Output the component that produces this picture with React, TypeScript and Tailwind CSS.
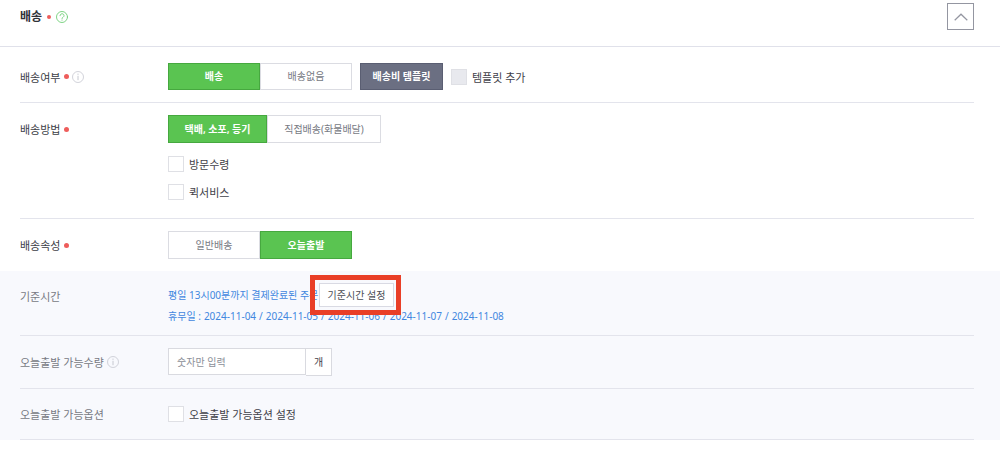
import { Fragment, useState, type ReactNode } from 'react';

const HOLIDAYS = ['2024-11-04', '2024-11-05', '2024-11-06', '2024-11-07', '2024-11-08'];

function Dot({ small = false }: { small?: boolean }) {
  return (
    <span
      role="img"
      aria-label="필수"
      className={small ? 'size-1 rounded-full bg-[#ee5d5b]' : 'size-[5px] rounded-full bg-[#ee5d5b]'}
    />
  );
}

function InfoButton() {
  return (
    <button type="button" aria-label="도움말" className="-ml-px text-[#c6c8d0]">
      <svg viewBox="0 0 12 12" className="size-3" fill="none" stroke="currentColor">
        <circle cx="6" cy="6" r="5.5" strokeWidth="0.8" />
        <path d="M6 4.800v4.400M6 2.600v1.200" strokeWidth="1" />
      </svg>
    </button>
  );
}

interface RowProps {
  label: string;
  required?: boolean;
  info?: boolean;
  muted?: boolean;
  last?: boolean;
  pad: string;
  head: string;
  children: ReactNode;
}

function Row({ label, required, info, muted, last, pad, head, children }: RowProps) {
  return (
    <div className={`ml-5 mr-[26px] flex ${last ? '' : 'border-b border-[#e3e4ec]'} ${pad}`}>
      <div
        className={`flex w-[148px] shrink-0 items-center gap-1 text-[11px] ${head} ${
          muted ? 'text-[#777a83]' : 'text-[#3c3e46]'
        }`}
      >
        <span className="pt-0.5 leading-4">{label}</span>
        {required && <Dot />}
        {info && <InfoButton />}
      </div>
      <div className="min-w-0 flex-1">{children}</div>
    </div>
  );
}

interface ToggleProps {
  label: string;
  options: { text: string; width: string }[];
  initial: number;
  height: string;
}

function Toggle({ label, options, initial, height }: ToggleProps) {
  const [active, setActive] = useState(initial);
  return (
    <div role="group" aria-label={label} className="flex">
      {options.map((option, i) => (
        <button
          key={option.text}
          type="button"
          aria-pressed={i === active}
          onClick={() => setActive(i)}
          className={`border text-[10px] ${height} ${option.width} ${
            i === active
              ? 'border-[#46a83f] bg-[#5ac451] font-semibold text-white'
              : i > active
                ? 'border-[#dbdce2] bg-white text-[#777a83]'
                : 'border-[#dbdce2] bg-white text-[#777a83]'
          }`}
        >
          {option.text}
        </button>
      ))}
    </div>
  );
}

function Check({ label, disabled = false }: { label: string; disabled?: boolean }) {
  return (
    <label className="flex h-4 w-fit items-center gap-[5px] text-[11px] text-[#3f4149]">
      <input
        type="checkbox"
        disabled={disabled}
        className="size-4 shrink-0 appearance-none border border-[#dfe0e5] bg-white checked:bg-[#5ac451] disabled:bg-[#e8e9ee]"
      />
      <span className="pt-0.5 leading-4">{label}</span>
    </label>
  );
}

export default function App() {
  return (
    <main className="bg-white font-['Noto_Sans','Noto_Sans_CJK_KR',sans-serif]">
      <header className="flex items-start justify-between border-b border-[#e0e1ea] pt-[3px] pr-[26px] pb-4 pl-5">
        <div className="flex h-[27px] items-center gap-[5px]">
          <h2 className="text-xs font-semibold text-[#303239]">배송</h2>
          <Dot small />
          <button type="button" aria-label="배송 도움말" className="text-[#72cf78]">
            <svg viewBox="0 0 12 12" className="size-3" fill="none" stroke="currentColor" strokeLinecap="round">
              <circle cx="6" cy="6" r="5.5" strokeWidth="0.9" />
              <path d="M4 4.700a2 1.900 0 1 1 3.100 1.500C6.400 6.600 6 6.900 6 7.500M6 9v.2" strokeWidth="0.9" />
            </svg>
          </button>
        </div>
        <button
          type="button"
          aria-label="접기"
          className="flex size-[27px] items-center justify-center border border-[#9496a1] text-[#9496a1]"
        >
          <svg viewBox="0 0 14 8" className="h-2 w-3.5" fill="none" stroke="currentColor">
            <path d="M.7 7.200 7 1.200l6.300 6" strokeWidth="1.200" />
          </svg>
        </button>
      </header>

      <Row label="배송여부" required info pad="pt-4 pb-3" head="h-[27px]">
        <div className="flex items-center gap-2">
          <Toggle
            label="배송여부"
            options={[
              { text: '배송', width: 'w-[92px]' },
              { text: '배송없음', width: 'w-[92px]' },
            ]}
            initial={0}
            height="h-[27px]"
          />
          <button
            type="button"
            className="h-[27px] w-[83px] border border-[#5a5e72] bg-[#6b6f82] text-[10px] font-semibold text-white"
          >
            배송비 템플릿
          </button>
          <Check label="템플릿 추가" disabled />
        </div>
      </Row>

      <Row label="배송방법" required pad="pt-3 pb-[18px]" head="h-7">
        <Toggle
          label="배송방법"
          options={[
            { text: '택배, 소포, 등기', width: 'w-[99px]' },
            { text: '직접배송(화물배달)', width: 'w-[114px]' },
          ]}
          initial={0}
          height="h-7"
        />
        <div className="mt-[13px] flex flex-col gap-3">
          <Check label="방문수령" />
          <Check label="퀵서비스" />
        </div>
      </Row>

      <Row label="배송속성" required last pad="py-3" head="h-7">
        <Toggle
          label="배송속성"
          options={[
            { text: '일반배송', width: 'w-[92px]' },
            { text: '오늘출발', width: 'w-[92px]' },
          ]}
          initial={1}
          height="h-7"
        />
      </Row>

      <section aria-label="오늘출발 설정" className="bg-[#f8f9fd]">
        <Row label="기준시간" muted pad="pt-3 pb-[10px]" head="h-[26px]">
          <div className="flex h-6 items-center text-[10px] text-[#4287df]">
            <span className="w-[151px] whitespace-nowrap">평일 13시00분까지 결제완료된 주문</span>
            <div className="relative">
              <button
                type="button"
                className="h-6 w-[75px] border border-[#d9dae3] bg-white text-[#4b4d55]"
              >
                기준시간 설정
              </button>
              <span className="pointer-events-none absolute -top-2 -right-[7px] -bottom-2 -left-[9px] z-10 border-5 border-[#e93f27]" />
            </div>
          </div>
          <p className="flex h-[18px] gap-[3px] text-[10px] leading-[18px] whitespace-nowrap text-[#4287df]">
            <span>휴무일 :</span>
            {HOLIDAYS.map((day, i) => (
              <Fragment key={day}>
                {i > 0 && <span>/</span>}
                <span>{day}</span>
              </Fragment>
            ))}
          </p>
        </Row>

        <Row label="오늘출발 가능수량" info muted pad="py-3" head="h-7">
          <div className="flex items-start">
            <input
              type="text"
              inputMode="numeric"
              aria-label="오늘출발 가능수량"
              placeholder="숫자만 입력"
              className="h-[27px] w-[138px] border border-[#d9dae0] bg-white px-2 text-[10px] text-[#3f4149] placeholder:text-[#8c8f98]"
            />
            <span className="flex h-7 w-[26px] items-center justify-center border border-l-0 border-[#d9dae0] bg-white text-[10px] text-[#3f4149]">
              개
            </span>
          </div>
        </Row>

        <Row label="오늘출발 가능옵션" muted pad="py-[17px]" head="h-4">
          <Check label="오늘출발 가능옵션 설정" />
        </Row>
      </section>
    </main>
  );
}
